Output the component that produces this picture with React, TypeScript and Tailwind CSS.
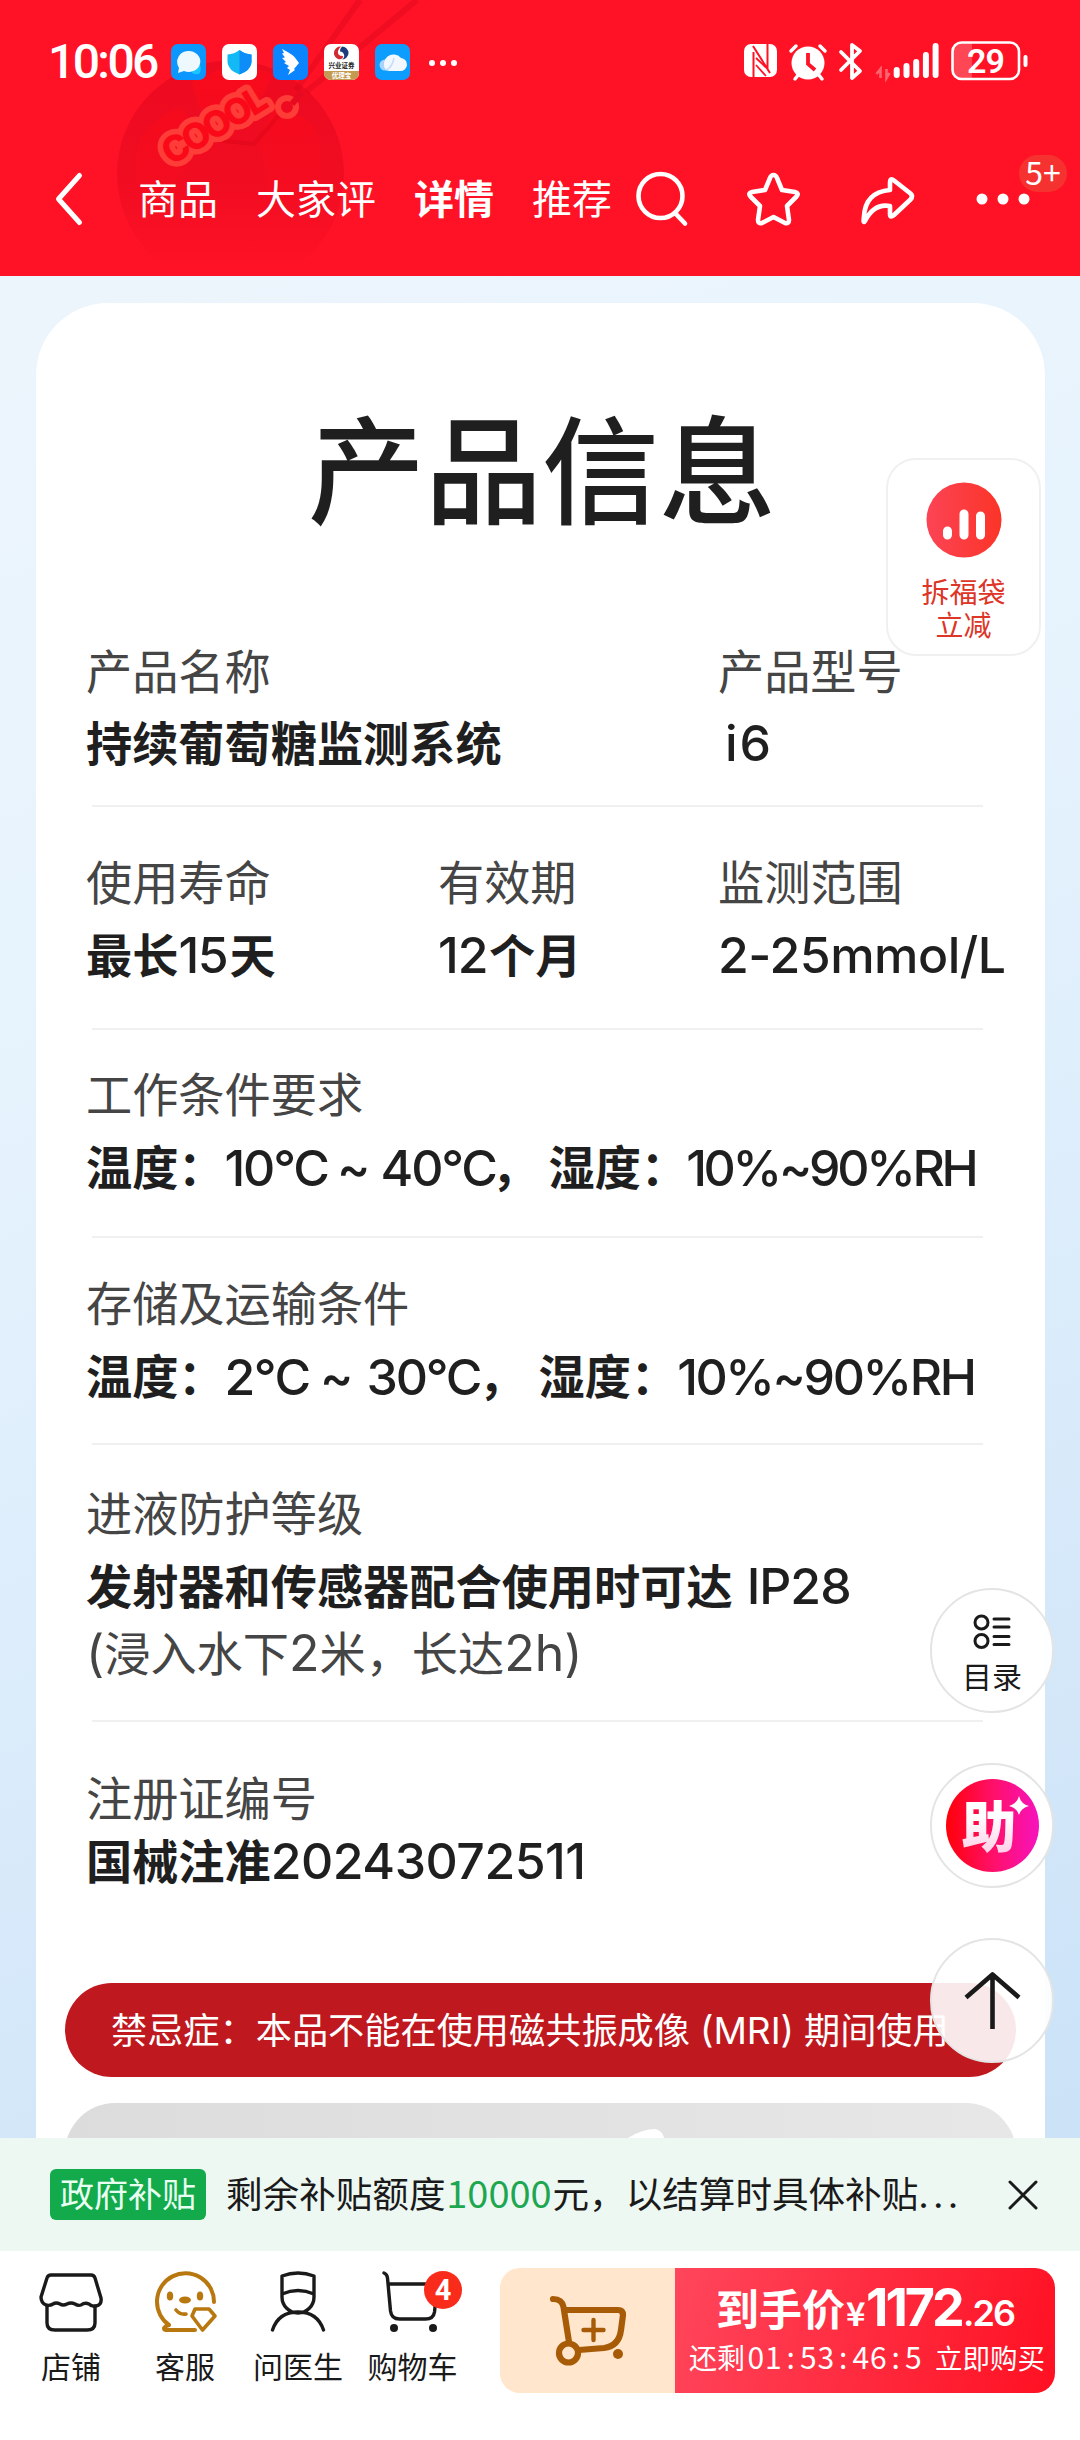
import type { ReactNode } from 'react'

const CJK = 'font-["Noto_Sans_CJK_SC",sans-serif]'

const APP_TILE = 'w-[35px] h-[36px] shrink-0'

function HeaderBall() {
  return (
    <svg className="absolute left-0 top-0" width="540" height="276" viewBox="0 0 540 276" fill="none" aria-hidden="true">
      <defs>
        <linearGradient id="ballFade" x1="0" y1="60" x2="0" y2="270" gradientUnits="userSpaceOnUse">
          <stop offset="0" stopColor="#d4001a" stopOpacity="0.42" />
          <stop offset="0.55" stopColor="#d4001a" stopOpacity="0.34" />
          <stop offset="1" stopColor="#d4001a" stopOpacity="0" />
        </linearGradient>
        <linearGradient id="panelFade" x1="0" y1="60" x2="0" y2="250" gradientUnits="userSpaceOnUse">
          <stop offset="0" stopColor="#ff0a18" stopOpacity="0.6" />
          <stop offset="1" stopColor="#ff0a18" stopOpacity="0" />
        </linearGradient>
        <text id="coool" fontFamily="Inter, sans-serif" fontSize="36" fontWeight="800" textLength="116">COOOL</text>
      </defs>
      <path d="M360 0 296 90M417 0 306 92" stroke="#e80a20" strokeWidth="6" opacity="0.6" />
      <circle cx="230.500" cy="174" r="113.500" fill="url(#ballFade)" />
      <path d="M192 82q38-24 82-8l-16 30-58 6zM134 160q8-40 46-52l16 18-8 40-38 44q-14-20-16-50zM272 112q34-4 46 24 10 40-8 76l-40-18-12-54z" fill="url(#panelFade)" />
      <path d="m216 140 38 4 26-30" stroke="#dd0518" strokeWidth="4" opacity="0.5" />
      <circle cx="287" cy="107" r="9" stroke="#ff3d38" strokeWidth="6" />
      <path d="m292 104 10-12" stroke="#e80a20" strokeWidth="6" />
      <g transform="translate(171 166) rotate(-31)">
        <use href="#coool" stroke="#ff3d38" strokeWidth="11" strokeLinejoin="round" />
        <use href="#coool" fill="#fa0a18" />
      </g>
    </svg>
  )
}

function StatusBar() {
  return (
    <div className="relative h-[124px] flex items-start pl-[48px] pr-[52px] text-white">
      <div className="mt-[35px] w-[123px] font-[Roboto] font-medium text-[48px] leading-[54px] tracking-[-2.6px]">10:06</div>
      <div className="mt-[44px] flex gap-4">
        <svg className={APP_TILE} viewBox="0 0 35 36">
          <rect width="35" height="36" rx="7" fill="#0c97ff" />
          <path d="M22 21h7q2 5-1 9-8 1-8-4z" fill="#19c5ff" />
          <path d="M17 7a11.500 10.500 0 1 1-4 20l-6 2 1-5A11 11 0 0 1 17 7z" fill="#eef8ff" />
        </svg>
        <svg className={APP_TILE} viewBox="0 0 35 36">
          <rect width="35" height="36" rx="7" fill="#fff" />
          <path d="M17.500 6q5 4 12 4.500v8q-1 8-12 12-11-4-12-12v-8q7-.5 12-4.500z" fill="#12b9f5" />
          <path d="M17.500 6q5 4 12 4.500v8q-1 8-12 12z" fill="#0c8df8" />
        </svg>
        <svg className={APP_TILE} viewBox="0 0 35 36">
          <rect width="35" height="36" rx="7" fill="#0a84ff" />
          <path d="M9 5q12 6 14 10l3 4-5 6 1 1-7 5 2-5-3-2 2-2-5-3 2-1-4-4 3-.5-3-4 2-.5z" fill="#fff" />
        </svg>
        <svg className={APP_TILE} viewBox="0 0 35 36">
          <rect width="35" height="36" rx="7" fill="#fff" />
          <path d="M0 27h35v2a7 7 0 0 1-7 7H7a7 7 0 0 1-7-7z" fill="#c49a52" />
          <path d="M17 2.500A6.500 6.500 0 0 0 14 15q5 1 5-3-6 0-5-5 1-3 3-4.500z" fill="#d22a35" />
          <path d="M18 2.500a6.500 6.500 0 0 1 0 13q3-2 2-5-1-3-4-3 0-3 2-5z" fill="#1d3a7c" />
          <text x="17.500" y="23.500" textAnchor="middle" fontSize="6.500" fontWeight="700" fontFamily="Noto Sans CJK SC" fill="#222">兴业证券</text>
          <text x="17.500" y="34" textAnchor="middle" fontSize="6.500" fontWeight="700" fontFamily="Noto Sans CJK SC" fill="#fff">优理宝</text>
        </svg>
        <svg className={APP_TILE} viewBox="0 0 35 36">
          <rect width="35" height="36" rx="7" fill="#0c9dff" />
          <circle cx="10" cy="21" r="5.500" fill="#a9d4ff" />
          <path d="M11 26a9 9 0 1 1 15-12 6.500 6.500 0 0 1-1 13H14z" fill="#f3f8ff" />
          <path d="M11 26q6-2 8-12" stroke="#c3dcff" strokeWidth="1.500" fill="none" />
        </svg>
      </div>
      <svg className="ml-[18px] mt-[59px]" width="30" height="8" viewBox="0 0 30 8" fill="#fff">
        <circle cx="4" cy="4" r="3" />
        <circle cx="15" cy="4" r="3" />
        <circle cx="26" cy="4" r="3" />
      </svg>

      <svg className="ml-auto mt-[38px]" width="286" height="46" viewBox="742 38 286 46" fill="none" stroke="#fff">
        {/* nfc */}
        <rect x="744" y="44" width="33" height="33" rx="7" fill="#fff" stroke="none" />
        <path d="M753.500 77V52M753 46l17 27M767.500 44v25" stroke="#ff1225" strokeWidth="2" />
        <path d="M756 58l10 9.500M756 65l10 11" stroke="#ff1225" strokeWidth="1.800" />
        {/* alarm */}
        <circle cx="808" cy="63" r="16.500" fill="#fff" stroke="none" />
        <path d="m791 51 5-5M825 51l-5-5M799 74l-4 5M818 74l4 5" strokeWidth="3.500" strokeLinecap="round" />
        <path d="M808 53v11l7 6" stroke="#ff1225" strokeWidth="3.800" />
        {/* bluetooth */}
        <path d="m841 52 19 19-8 7V45l8 6-19 19" strokeWidth="3.800" strokeLinecap="round" strokeLinejoin="round" />
        {/* data arrows + signal */}
        <path d="M880.500 78V69l-4 5M886.500 69v9l3-5" stroke="#ff6570" strokeWidth="2.600" />
        <path d="M896.700 70v5M906.500 66v9M916.200 62v13M925.900 55v20M935.600 46v29" strokeWidth="6" strokeLinecap="round" />
        {/* battery */}
        <path d="M961 43h11v36h-11a8 8 0 0 1-8-8V51a8 8 0 0 1 8-8z" fill="#ff4655" stroke="none" />
        <rect x="952.500" y="42.500" width="66.500" height="36.500" rx="9" strokeWidth="2.600" />
        <path d="M1025.500 57v8" strokeWidth="4" strokeLinecap="round" />
        <text x="985.500" y="73" textAnchor="middle" fontFamily="Roboto" fontWeight="600" fontSize="34" letterSpacing="-1" fill="#fff" stroke="none">29</text>
      </svg>
    </div>
  )
}

function NavBar() {
  return (
    <nav className="relative h-[150px] flex items-center pl-[54px] text-white text-[40px] leading-[50px]">
      <svg width="32" height="56" viewBox="54 171 32 56" fill="none" stroke="#fff" strokeWidth="5" strokeLinecap="round" strokeLinejoin="round">
        <path d="M79.500 175.500 58.500 199l21 23.500" />
      </svg>
      <div className="ml-[52px] mb-[5px] flex">
        <span className="w-[118px]">商品</span>
        <span className="w-[158px]">大家评</span>
        <span className="w-[118px] font-bold">详情</span>
        <span className="w-[102px]">推荐</span>
      </div>
      <svg width="445" height="60" viewBox="634 169 445 60" fill="none" stroke="#fff" strokeWidth="4.600" strokeLinecap="round" strokeLinejoin="round">
        <circle cx="660.500" cy="196" r="22" />
        <path d="m675 213 10 10.500" />
        <path d="M773.500 175q2.400 0 3.500 3l5 12 13 2q4.500 1 1.500 4.500L787 206l2 14q0 4-4 3l-11.500-6-11.500 6q-4 1-4-3l2-14-9.500-9.500q-3-3.500 1.500-4.500l13-2 5-12q1.100-3 3.500-3z" />
        <path d="M890 183q0-6 4-2.500l16.500 13q3 3 0 6L894 215q-4 3.500-4-1v-8q-16-3-25 15-2 3-1.200-3 1-26 26.200-28z" />
        <circle cx="982" cy="199" r="5.500" fill="#fff" stroke="none" />
        <circle cx="1003" cy="199" r="5.500" fill="#fff" stroke="none" />
        <circle cx="1024" cy="199" r="5.500" fill="#fff" stroke="none" />
      </svg>
      <span className="absolute left-[1019px] top-[31px] w-12 h-[37px] rounded-full bg-[#f53230] text-center text-[32px] leading-[32px]">5+</span>
    </nav>
  )
}

function Label({ children, className = '' }: { children: ReactNode; className?: string }) {
  return <div className={`text-[46.2px] leading-[46px] h-[46px] text-[#454545] whitespace-nowrap ${className}`}>{children}</div>
}

function Value({ children, className = '' }: { children: ReactNode; className?: string }) {
  return <div className={`text-[46.2px] leading-[46px] h-[46px] font-bold text-[#1f1f1f] whitespace-nowrap ${className}`}>{children}</div>
}

// Latin runs use a slightly larger face than the Chinese text around them
function Latin({ children, className = 'font-medium' }: { children: ReactNode; className?: string }) {
  return <span className={`inline-block font-[Inter] text-[50px] leading-[46px] ${className}`}>{children}</span>
}

function Section({ children, className }: { children: ReactNode; className: string }) {
  return <section className={`ml-[56px] w-[891px] border-b-2 border-[#f0f0f0] ${className}`}>
    <div className="-ml-[6px] w-[940px]">{children}</div>
  </section>
}

function ProductCard() {
  return (
    <div className="ml-9 mt-[27px] w-[1009px] h-[1900px] shrink-0 rounded-t-[72px] bg-white">
      <h1 className="pl-[3px] pt-[91px] h-[323px] text-center text-[117px] leading-[140px] font-medium text-[#1f1f1f]">产品信息</h1>

      <Section className="h-[181px] pt-[20px]">
        <div className="flex">
          <div className="w-[632px]">
            <Label>产品名称</Label>
            <Value className="mt-[26px]">持续葡萄糖监测系统</Value>
          </div>
          <div>
            <Label>产品型号</Label>
            <Value className="mt-[26px] pl-[7px]"><Latin className="font-medium tracking-[2px]">i6</Latin></Value>
          </div>
        </div>
      </Section>

      <Section className="h-[223px] pt-[50px]">
        <div className="flex">
          <div className="w-[352px]">
            <Label>使用寿命</Label>
            <Value className="mt-[27px]">最长<Latin className="w-[51px] font-medium tracking-[-1.5px]">15</Latin>天</Value>
          </div>
          <div className="w-[280px]">
            <Label>有效期</Label>
            <Value className="mt-[27px]"><Latin className="w-[51px] font-medium tracking-[-1px]">12</Latin>个月</Value>
          </div>
          <div>
            <Label>监测范围</Label>
            <Value className="mt-[27px]"><Latin className="font-medium tracking-[-0.5px]">2-25mmol/L</Latin></Value>
          </div>
        </div>
      </Section>

      <Section className="h-[208px] pt-[39px]">
        <Label>工作条件要求</Label>
        <Value className="mt-[27px] flex">
          温度：
          <Latin className="mt-[3px] w-[102px] font-medium tracking-[-2.2px]">10°C</Latin>
          <Latin className="mt-[3px] w-[54px] text-center font-medium">~</Latin>
          <Latin className="mt-[3px] w-[111px] font-medium tracking-[-2.2px]">40°C</Latin>
          <span className="w-[57px]">，</span>
          湿度：
          <Latin className="mt-[3px] -ml-px font-medium tracking-[-3.3px]">10%~90%RH</Latin>
        </Value>
      </Section>

      <Section className="h-[207px] pt-[40px]">
        <Label>存储及运输条件</Label>
        <Value className="mt-[27px] flex">
          温度：
          <Latin className="mt-[3px] w-[82px] font-medium tracking-[-1.5px]">2°C</Latin>
          <Latin className="mt-[3px] w-[60px] text-center font-medium">~</Latin>
          <Latin className="mt-[3px] w-[112px] font-medium tracking-[-2.2px]">30°C</Latin>
          <span className="w-[60px]">，</span>
          湿度：
          <Latin className="mt-[3px] font-medium tracking-[-2.4px]">10%~90%RH</Latin>
        </Value>
      </Section>

      <Section className="h-[277px] pt-[43px]">
        <Label>进液防护等级</Label>
        <Value className="mt-[27px]">发射器和传感器配合使用时可达<Latin className="ml-[14px] font-medium tracking-[-1px]">IP28</Latin></Value>
        <Label className="mt-[21px]"><Latin className="font-normal">(</Latin>浸入水下<Latin className="font-normal">2</Latin>米，长达<Latin className="font-normal">2h)</Latin></Label>
      </Section>

      <div className="pl-[50px] pt-[51px] h-[261px]">
        <Label>注册证编号</Label>
        <Value className="mt-[17px]">国械注准<Latin className="font-medium tracking-[-0.5px]">20243072511</Latin></Value>
      </div>

      <div className="ml-[29px] w-[951px] h-[94px] rounded-full bg-[#bf181f] pl-[46px] text-white text-[36.2px] leading-[91px] whitespace-nowrap">
        禁忌症：本品不能在使用磁共振成像<span className="inline-block w-[114px] text-center font-[Inter] text-[37px]">(MRI)</span>期间使用
      </div>

      <div className="mt-[26px] ml-[29px] w-[951px] h-[100px] rounded-t-[50px] overflow-hidden bg-linear-to-r from-[#dcdcdc] to-[#e7e7e7]">
        <svg className="ml-[558px] mt-[24px]" width="48" height="30" viewBox="0 0 48 30" fill="#fff">
          <path d="M0 14Q18 2 32 2q8 1 10 12v16H0z" />
        </svg>
      </div>
    </div>
  )
}

function FloatingActions() {
  const round = 'absolute left-[930px] w-[124px] h-[125px] rounded-full border-2 border-[#e4e4e4]'
  return (
    <>
      <div className="absolute left-[886px] top-[458px] w-[155px] h-[198px] rounded-[30px] border-2 border-[#f0f0f0] bg-white flex flex-col items-center pt-[22px] text-[28px] leading-[33px] text-[#dd3527]">
        <svg width="76" height="76" viewBox="0 0 76 76" className="mb-[17px]">
          <defs>
            <linearGradient id="bag" x1="0" y1="0.500" x2="1" y2="0.500">
              <stop offset="0" stopColor="#fc4456" />
              <stop offset="1" stopColor="#fb3427" />
            </linearGradient>
          </defs>
          <circle cx="38" cy="38" r="37.500" fill="url(#bag)" />
          <path d="M21.500 49v4M38 32v21M54.500 34v19" stroke="#fff" strokeWidth="9" strokeLinecap="round" />
        </svg>
        <span className="whitespace-pre-line text-center">{'拆福袋\n立减'}</span>
      </div>

      <button className={`${round} top-[1588px] bg-white/95 flex flex-col items-center pt-[24px] text-[30px] leading-[40px] text-[#1a1a1a]`}>
        <svg width="40" height="36" viewBox="0 0 40 36" fill="none" stroke="#1a1a1a" strokeWidth="3" strokeLinecap="round" className="mb-[5px] shrink-0">
          <circle cx="9.500" cy="8.500" r="6.500" />
          <circle cx="9.500" cy="27" r="6.500" />
          <path d="M22 5h15M22 13h15M22 22.500h15M22 30.500h15" />
        </svg>
        目录
      </button>

      <button className={`${round} top-[1763px] bg-white`}>
        <svg width="120" height="121" viewBox="0 0 120 121">
          <defs>
            <linearGradient id="assist" x1="0" y1="0.500" x2="1" y2="0.500">
              <stop offset="0" stopColor="#ff0008" />
              <stop offset="0.500" stopColor="#ff1068" />
              <stop offset="1" stopColor="#f713bd" />
            </linearGradient>
            <linearGradient id="assistText" x1="0" y1="0" x2="0" y2="1">
              <stop offset="0.400" stopColor="#fff" />
              <stop offset="1" stopColor="#ffc4e2" />
            </linearGradient>
          </defs>
          <circle cx="60.500" cy="60.500" r="46.500" fill="url(#assist)" />
          <text x="57" y="82" textAnchor="middle" fontFamily="Noto Sans CJK SC" fontWeight="900" fontSize="55" fill="url(#assistText)">助</text>
          <path d="M87 31q2 8 10 10-8 2-10 9-2-7-10-9 8-2 10-10z" fill="#fff" />
        </svg>
      </button>

      <button className={`${round} top-[1938px] bg-white/90`}>
        <svg width="120" height="121" viewBox="0 0 120 121" fill="none" stroke="#1a1a1a" strokeWidth="4.600">
          <path d="M60.500 89V36M34 57.500l26.500-23 26.500 23" strokeLinejoin="round" />
        </svg>
      </button>
    </>
  )
}

function SubsidyBar() {
  return (
    <div className="relative h-[113px] shrink-0 flex items-center bg-[#eef8f3] pl-[50px] text-[36.6px] text-[#1a1a1a] whitespace-nowrap">
      <span className="w-[156px] h-[51px] rounded-md bg-[#12aa4b] text-center text-[34px] leading-[48px] text-[#e9fff2]">政府补贴</span>
      <span className="ml-[20px] mb-[3px] leading-[50px]">
        剩余补贴额度<span className="inline-block w-[107px] text-center text-[38px] text-[#1ea750]">10000</span>元，以结算时具体补贴<span className="font-[Inter] tracking-[4.2px]">...</span>
      </span>
      <svg className="absolute left-[1007px] top-[41px]" width="32" height="32" viewBox="0 0 32 32" stroke="#1a1a1a" strokeWidth="3" strokeLinecap="round">
        <path d="m3 3 26 26M29 3 3 29" />
      </svg>
    </div>
  )
}

function Tab({ label, children, className }: { label: string; children: ReactNode; className: string }) {
  return (
    <div className={`flex flex-col items-center shrink-0 text-[30px] leading-[40px] text-[#1a1a1a] ${className}`}>
      <svg width="72" height="68" viewBox="0 0 72 68" fill="none" stroke="#1a1a1a" strokeWidth="3.400" strokeLinecap="round" strokeLinejoin="round" className="mb-[9px]">
        {children}
      </svg>
      {label}
    </div>
  )
}

function BottomBar() {
  const countdown = '01:53:46:5'
  return (
    <div className="relative h-[189px] shrink-0 flex bg-white pt-[17px] pl-[14px]">
      <Tab label="店铺" className="w-[114px]">
        <path d="M16 7h40q3 0 4 3l6 20q1 7-5 8-4 1-7-2-4-2-8 1-3 1-6-1-4-2-8 0-4 2-7 0-4-2-7 0-3 2-7 1-5-2-5-8l6-19q1-3 4-3z" />
        <path d="M12 38v17q0 7 8 7h32q8 0 8-7V38" />
      </Tab>
      <Tab label="客服" className="w-[114px]">
        <g stroke="#b8780f" strokeWidth="4">
          <path d="M65 34A28.500 28.500 0 1 0 20 57l-3 1q-4 3 0 4h29" />
          <path d="M46 41h14l6 7-12.500 14L43 48z" strokeWidth="3.600" />
          <path d="M27 42q4 5 10 4" strokeWidth="3.600" />
        </g>
        <ellipse cx="21" cy="28" rx="3.200" ry="4.500" fill="#b8780f" stroke="none" />
        <ellipse cx="51" cy="28" rx="3.200" ry="4.500" fill="#b8780f" stroke="none" />
        <ellipse cx="36" cy="32" rx="6" ry="3.500" fill="#b8780f" stroke="none" />
      </Tab>
      <Tab label="问医生" className="w-[112px]">
        <path d="M20 8q16-6 32 0v21a16 16 0 0 1-32 0zM20 26q16-7 32 0M10.500 62q6-18 25.500-18t25.500 18" />
      </Tab>
      <Tab label="购物车" className="w-[117px]">
        <path d="M7 5q3 1 3.500 5l3 33q1 8 9 8h26q8 0 9-7l3-28H12" />
        <circle cx="17" cy="60" r="4" fill="#1a1a1a" stroke="none" />
        <circle cx="56" cy="60" r="4" fill="#1a1a1a" stroke="none" />
      </Tab>
      <span className="absolute left-[424px] top-[20px] w-[38px] h-[38px] rounded-full bg-[#f92c1b] text-center font-[Roboto] text-[29px] font-bold leading-[39px] text-white">4</span>

      <div className="absolute left-[500px] top-[17px] w-[555px] h-[125px] flex rounded-[20px] overflow-hidden">
        <div className="w-[175px] bg-[#ffe6cc] flex">
          <svg width="175" height="125" viewBox="500 2268 175 125" fill="none" stroke="#a85b06" strokeWidth="6.200" strokeLinecap="round" strokeLinejoin="round">
            <path d="M553 2299q9 0 10.500 8l5.500 35M564 2310h54q5 0 5 5l-2 15q-2 16-17 18l-25 2" />
            <circle cx="568.500" cy="2353" r="9.500" />
            <path d="M593.500 2320v20M583.500 2330h20" strokeWidth="4.400" />
            <circle cx="618" cy="2354" r="5" fill="#a85b06" stroke="none" />
          </svg>
        </div>
        <div className="flex-1 bg-[linear-gradient(105deg,#ff465c,#ff1022)] text-white whitespace-nowrap">
          <div className="flex items-baseline pl-[41px] pt-[12px] h-[72px] font-bold leading-[54px]">
            <span className="w-[130px] text-[43px]">到手价</span>
            <span className="w-[20px] text-[33px]">¥</span>
            <span className="w-[97px] font-[Inter] text-[52px] tracking-[-3px]">1172</span>
            <span className="font-[Inter] font-semibold text-[36px] tracking-[-2px]">.26</span>
          </div>
          <div className="flex items-baseline pl-[14px] text-[28px] leading-[32px]">
            <span className="w-[58px]">还剩</span>
            <span className="flex w-[188px] text-[30px]">
              {countdown.split('').map((ch, i) => (
                <span key={i} className="w-[17.5px] text-center">{ch}</span>
              ))}
            </span>
            <span className="text-[27.5px]">立即购买</span>
          </div>
        </div>
      </div>
    </div>
  )
}

export default function App() {
  return (
    <div className={`relative w-[1080px] h-[2440px] overflow-hidden flex flex-col bg-white ${CJK}`}>
      <header className="relative h-[276px] shrink-0 bg-[#ff1225]">
        <HeaderBall />
        <StatusBar />
        <NavBar />
      </header>
      <main className="h-[1862px] shrink-0 overflow-hidden flex flex-col bg-[linear-gradient(158deg,#edf5fc_0%,#e6f3fd_35%,#d8eafa_70%,#cbe2f7_100%)]">
        <ProductCard />
      </main>
      <SubsidyBar />
      <BottomBar />
      <FloatingActions />
    </div>
  )
}
